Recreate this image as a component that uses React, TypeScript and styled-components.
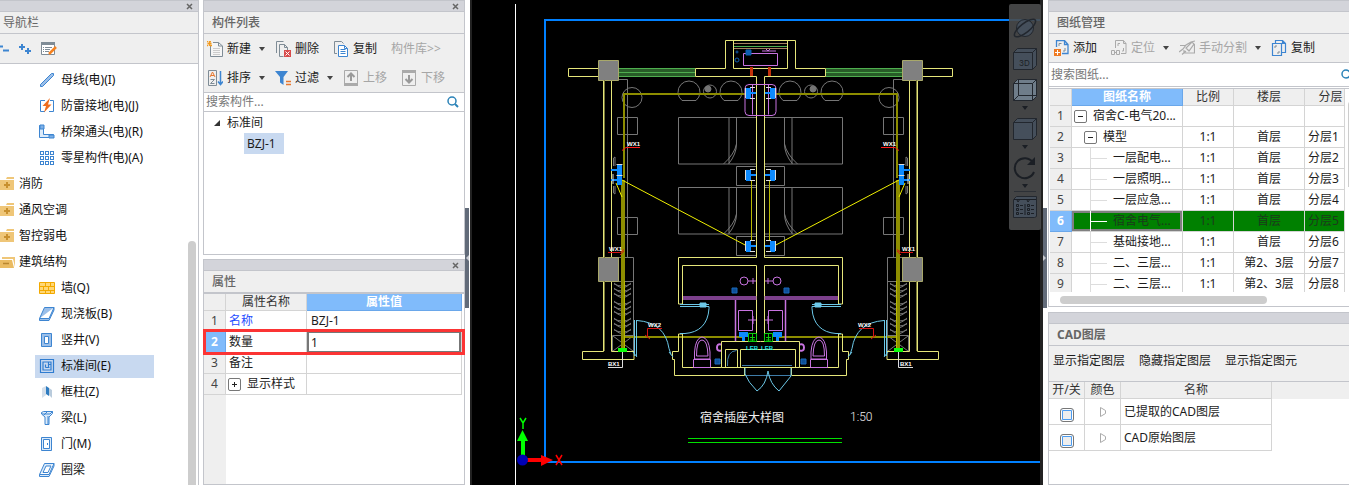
import React from "react";
import styled, { createGlobalStyle, css } from "styled-components";

const line = "#c3c5cb";
const grid = "#d4d4d4";
const blue = "#3d85d1";

const GlobalStyle = createGlobalStyle`
  * { box-sizing: border-box; }
  body {
    margin: 0;
    background: #fff;
    color: #1c1c1c;
    font: 12px/16px "Noto Sans", "Noto Sans CJK SC", sans-serif;
    overflow: hidden;
  }
  button, input { font: inherit; color: inherit; }
  svg { display: block; flex: none; }
`;

/* ---------- shell ---------- */

const Shell = styled.div`
  display: flex;
  height: 100vh;
`;

const NavColumn = styled.nav`
  display: flex;
  flex: 0 0 199px;
  flex-direction: column;
  margin-right: 4px;
  border-right: 1px solid ${line};
`;

const SideColumn = styled.div<{ $width: number; $top: number; $gap: number; $bottom: number }>`
  flex: 0 0 ${(p) => p.$width}px;
  min-width: 0;
  display: grid;
  grid-template-columns: minmax(0, 1fr);
  grid-template-rows: minmax(0, ${(p) => p.$top}fr) minmax(0, ${(p) => p.$bottom}fr);
  row-gap: ${(p) => p.$gap}px;
`;

const Panel = styled.section<{ $open?: boolean }>`
  display: flex;
  flex-direction: column;
  min-height: 0;
  border: 0 solid ${line};
  border-left-width: 1px;
  border-right-width: ${(p) => (p.$open ? 0 : 1)}px;
  border-bottom-width: 1px;
`;

const Strip = styled.div`
  display: flex;
  flex: 0 0 12px;
  align-items: center;
  justify-content: flex-end;
  padding-right: 5px;
  background: #d3d4da;
  border-top: 1px solid ${line};
  border-bottom: 1px solid ${line};
`;

const CloseButton = styled.button`
  display: flex;
  padding: 0;
  border: 0;
  background: none;
`;

const Title = styled.h2<{ $indent: number; $weight?: number }>`
  flex: 0 0 22px;
  margin: 0;
  padding-left: ${(p) => p.$indent}px;
  background: #efefef;
  border-bottom: 1px solid ${line};
  color: #666;
  font-size: 12px;
  line-height: 21px;
  font-weight: ${(p) => p.$weight ?? 400};
`;

const Toolbar = styled.div<{ $height: number; $pad: number; $gap: number }>`
  display: flex;
  flex: none;
  height: ${(p) => p.$height}px;
  align-items: center;
  gap: ${(p) => p.$gap}px;
  padding-left: ${(p) => p.$pad}px;
  background: #efefef;
  overflow: hidden;
`;

const ToolArea = styled.div`
  flex: none;
  background: #efefef;
  border-bottom: 1px solid ${line};
`;

const Tool = styled.button<{ $drop?: boolean }>`
  display: flex;
  flex: none;
  align-items: center;
  gap: 4px;
  padding: 0 ${(p) => (p.$drop ? 0 : 4)}px 0 0;
  border: 0;
  background: none;
  white-space: nowrap;
  &:disabled { color: #a6a6a6; }
`;

const CaretBox = styled.span`
  padding-left: 4px;
`;

const PlainTool = styled.button`
  flex: none;
  padding: 0 0 6px;
  border: 0;
  background: none;
  white-space: nowrap;
`;

const IconTool = styled.button`
  display: flex;
  padding: 0;
  border: 0;
  background: none;
`;

const Search = styled.label<{ $height: number; $clip?: boolean }>`
  display: flex;
  flex: 0 0 ${(p) => p.$height}px;
  align-items: center;
  padding: 0 ${(p) => (p.$clip ? 0 : 5)}px 0 2px;
  border-bottom: 1px solid ${line};
  overflow: hidden;
  svg { margin-right: ${(p) => (p.$clip ? -4 : 0)}px; }
`;

const SearchInput = styled.input`
  flex: 1;
  min-width: 0;
  height: 16px;
  padding: 0;
  border: 0;
  outline: 0;
  background: none;
  &::placeholder { color: #777; opacity: 1; }
`;

/* ---------- navigation ---------- */

const NavBody = styled.div`
  display: flex;
  flex: 1;
  min-height: 0;
`;

const NavList = styled.ul`
  flex: 1;
  margin: 0;
  padding: 3px 0 0;
  list-style: none;
  overflow: hidden;
`;

const NavRow = styled.li<{ $child?: boolean }>`
  display: flex;
  align-items: center;
  height: 26px;
  padding-left: ${(p) => (p.$child ? 35 : 0)}px;
`;

const NavItem = styled.a<{ $child?: boolean; $active?: boolean }>`
  display: flex;
  align-items: center;
  gap: ${(p) => (p.$child ? 6 : 4)}px;
  width: ${(p) => (p.$child ? 119 : 150)}px;
  height: 23px;
  padding-left: ${(p) => (p.$child ? 4 : 0)}px;
  background: ${(p) => (p.$active ? "#c8d9f0" : "transparent")};
  color: #111;
  text-decoration: none;
  white-space: nowrap;
`;

const Track = styled.div<{ $width: number; $offset: number; $inset?: number }>`
  flex: 0 0 ${(p) => p.$width}px;
  min-width: 0;
  padding: ${(p) => p.$offset}px 0 0 ${(p) => p.$inset ?? 0}px;
  overflow: hidden;
`;

const Thumb = styled.div<{ $length?: number }>`
  width: 8px;
  height: ${(p) => (p.$length ? `${p.$length}px` : "100%")};
  border-radius: 4px 4px 0 0;
  background: #cdcdcd;
`;

/* ---------- component tree ---------- */

const Tree = styled.ul`
  flex: 1;
  margin: 0;
  padding: 0;
  list-style: none;
`;

const TreeRow = styled.li`
  display: flex;
  align-items: center;
  height: 21px;
  gap: 7px;
  padding-left: 10px;
`;

const TreeLeaf = styled.button`
  height: 21px;
  margin-left: 30px;
  padding: 0 8px 0 3px;
  border: 0;
  background: #c8d9f0;
`;

/* ---------- tables ---------- */

const Table = styled.table<{ $row: number }>`
  table-layout: fixed;
  width: 0;
  border-collapse: separate;
  border-spacing: 0;
  th, td {
    height: ${(p) => p.$row}px;
    padding: 0;
    border: 0 solid ${grid};
    border-right-width: 1px;
    border-bottom-width: 1px;
    font-weight: 400;
    line-height: 16px;
    white-space: nowrap;
    overflow: hidden;
  }
  thead th { height: 17px; background: #efefef; text-align: center; color: #333; }
  tbody th { background: #efefef; color: #444; text-align: center; }
`;

const HeadCell = styled.th<{ $w: number; $active?: boolean; $shift?: number }>`
  width: ${(p) => p.$w}px;
  ${(p) => p.$shift && css`&& { padding-left: ${p.$shift}px; }`}
  ${(p) =>
    p.$active &&
    css`
      && { background: #80bbfb; color: #fff; font-weight: 700; border-color: #6aa7ea; }
    `}
`;

const RowHead = styled.th<{ $active?: boolean }>`
  ${(p) =>
    p.$active &&
    css`
      && { background: #80bbfb; color: #fff; font-weight: 700; border-color: #6aa7ea; }
    `}
`;

const Row = styled.tr<{ $green?: boolean; $marked?: boolean }>`
  ${(p) => p.$marked && css`position: relative;`}
  ${(p) => p.$green && css`td { background: #008000; color: #1c3a1c; }`}
`;

const Cell = styled.td<{ $pad?: number; $center?: boolean; $link?: boolean; $focus?: boolean }>`
  && { padding-left: ${(p) => p.$pad ?? 0}px; }
  text-align: ${(p) => (p.$center ? "center" : "left")};
  ${(p) => p.$link && css`color: #1f4dff;`}
  ${(p) => p.$focus && css`box-shadow: inset 0 0 0 2px #808080;`}
`;

const CellLine = styled.div<{ $gap: number }>`
  display: flex;
  align-items: center;
  gap: ${(p) => p.$gap}px;
`;

const ValueInput = styled.input`
  display: block;
  width: 100%;
  height: 20px;
  padding: 0 2px;
  border: 2px solid #777;
  border-width: 1px 2px;
  outline: 0;
`;

const RedMark = styled.span`
  position: absolute;
  top: -3px;
  right: -3px;
  bottom: -2px;
  left: -1px;
  border: 3px solid #fb3434;
  pointer-events: none;
`;

const Expander = styled.button`
  display: flex;
  flex: none;
  align-items: center;
  justify-content: center;
  width: 13px;
  height: 13px;
  padding: 0;
  border: 1px solid #777;
  border-radius: 2px;
  background: #fff;
`;

const Branch = styled.span<{ $bright?: boolean }>`
  display: flex;
  align-items: center;
  width: 17px;
  height: 20px;
  border-left: 1px solid ${(p) => (p.$bright ? "#fff" : "#ddd")};
  &::after {
    content: "";
    flex: 1;
    height: 1px;
    background: ${(p) => (p.$bright ? "#fff" : "#ddd")};
  }
`;

const PropertyBody = styled.div`
  flex: 1;
  border-top: 1px solid ${line};
  background: linear-gradient(to right, #efefef 22px, #fff 22px);
`;

const SheetBody = styled.div`
  display: flex;
  flex: 1;
  min-height: 0;
  margin-top: 1px;
  border-top: 1px solid ${line};
  padding-left: 1px;
`;

const SheetScroll = styled.div`
  flex: 1;
  overflow: hidden;
`;

const BottomTrack = styled.div`
  flex: 0 0 14px;
  padding: 4px 0 0 11px;
`;

const BottomThumb = styled.div`
  width: 207px;
  height: 8px;
  border-radius: 4px;
  background: #cdcdcd;
`;

const LayerBody = styled.div`
  flex: 1;
  border-top: 1px solid ${line};
  background: linear-gradient(to bottom, #efefef 17px, #fff 17px);
`;

const LayerCheck = styled.input`
  appearance: none;
  display: block;
  width: 14px;
  height: 14px;
  margin: 7px auto 0;
  border: 1px solid #777;
  border-radius: 3px;
  background: #eee;
  box-shadow: inset 0 0 0 1px #fff, inset 0 0 0 2px #4c9cf0;
`;

/* ---------- splitters and canvas ---------- */

const Splitter = styled.div`
  flex: 0 0 5px;
  padding-top: 208px;
`;

const Handle = styled.div`
  display: flex;
  align-items: center;
  width: 4px;
  height: 100px;
  background: #626b79;
`;

const Stage = styled.main`
  position: relative;
  flex: 1;
  min-width: 0;
  background: #000;
  > svg { width: 100%; height: 100%; }
`;

const ViewTools = styled.div`
  position: absolute;
  top: 4px;
  right: 2px;
  display: flex;
  flex-direction: column;
  align-items: center;
  width: 32px;
  height: 226px;
  padding-top: 12px;
  background: #4a4b4ce6;
  border-radius: 2px;
`;

const ViewButton = styled.button<{ $gap?: number }>`
  display: flex;
  flex-direction: column;
  align-items: center;
  gap: 4px;
  padding: 0;
  margin-bottom: ${(p) => p.$gap ?? 7}px;
  border: 0;
  background: none;
`;

const ViewRule = styled.div`
  flex: none;
  width: 22px;
  height: 1px;
  margin-bottom: 3px;
  background: #2c3036;
`;

/* ---------- icons ---------- */

const I = ({ children, w = 16, h = 16 }: { children: React.ReactNode; w?: number; h?: number }) => (
  <svg width={w} height={h} viewBox={`0 0 ${w} ${h}`} fill="none" aria-hidden="true">{children}</svg>
);

const Close = () => (
  <CloseButton aria-label="关闭">
    <I w={7} h={7}><path d="M1 1l5 5M6 1l-5 5" stroke="#666" strokeWidth="1.5" /></I>
  </CloseButton>
);

const Caret = ({ color = "#444" }: { color?: string }) => (
  <I w={6} h={4}><path d="M0 0h6L3 4z" fill={color} /></I>
);

const Magnifier = () => (
  <I w={12} h={12}>
    <circle cx="5" cy="5" r="4" stroke="#2b83b8" strokeWidth="1.5" />
    <path d="M8 8l3 3" stroke="#2b83b8" strokeWidth="2" />
  </I>
);

const icons = {
  fresh: <I><path d="M3.500 5v10.500h12V5l-4-3.500H6" fill="#f5f5f5" stroke="#7f8c96" /><path d="M11.500 1.500V5h4" stroke="#7f8c96" /><path d="M6 7.500h7M6 9.500h7M6 11.500h7M6 13.500h7" stroke="#ccc" /><path d="M0 .5h1m1 0h2M.5 2.500h4M0 4.500h1m2 0h2M2.500 0v5" stroke="#f39a1e" strokeWidth="1.500" /></I>,
  remove: <I><path d="M1.500 12V.5h7M4.500 15.500V3.500h5l3 3V9M9.500 3.500v3h3M4.500 15.500h4" stroke="#7f8c96" /><path d="M9 9h7v7H9z" fill="#d84b4b" /><path d="M10.500 10.500l4 4M14.500 10.500l-4 4" stroke="#fff" /></I>,
  copy: <I><path d="M1.500 12.500V.5h7l2 2M1.500 12.500H4" stroke="#7f8c96" /><path d="M5.500 4.500h6l3 3v8h-9z" fill="#fff" stroke={blue} /><path d="M11.500 4.500v3h3M7.500 8.500h5M7.500 10.500h5M7.500 12.500h5" stroke={blue} /></I>,
  sort: <I><path d="M1.500.5h8v15h-8z" stroke="#7f8c96" /><path d="M3 7l2.500-5L8 7M4 5.500h3" stroke="#e8772e" /><path d="M3.500 9.500h4l-4 4h4" stroke="#7f8c96" /><path d="M13.500 1v13M11 11.500l2.500 3 2.500-3" stroke={blue} strokeWidth="1.500" /></I>,
  filter: <I><path d="M0 1h13L8.500 7v8L5 12.500V7z" fill={blue} /><path d="M11 11.500h5M11 14.500h5" stroke="#e8772e" strokeWidth="1.500" /></I>,
  up: <I><path d="M1.500.5h13v15h-13z" stroke="#aaa" /><path d="M1 13h14v3H1z" fill="#aaa" /><path d="M8 11V4M4.500 7L8 3.500 11.500 7" stroke="#999" strokeWidth="2" /></I>,
  down: <I><path d="M1.500.5h13v15h-13z" stroke="#aaa" /><path d="M1 0h14v3H1z" fill="#aaa" /><path d="M8 5v7M4.500 9L8 12.500 11.500 9" stroke="#999" strokeWidth="2" /></I>,
  add: <I><path d="M3.500 7V.5h8l3.500 4v9H9M11.500.5v4H15" stroke={blue} strokeWidth="1.300" /><path d="M6 6V3.500H8.500M12 8v3h-2" stroke="#7f8c96" /><path d="M1 9h7v7H1z" fill="#ef7a22" /><path d="M4.500 10v5M2 12.500h5" stroke="#fff" /></I>,
  locate: <I><path d="M4.500 8V.5h8l2.500 3v10H10M12.500.5v3H15M7 6V3.500h2M12.500 8v3H11" stroke="#aaa" /><path d="M.5 10.500h3v4h-3zM5.500 10.500h3v4h-3zM3 12.500h3" stroke="#aaa" /></I>,
  split: <I><path d="M0 12l4-3 3-4 5-3 4-1M5 13h10.500V4M1 5.500h6M5 13v-3M7 8l3 3 5-7-2-2zM3 14.500L7 11" stroke="#aaa" strokeWidth="1.200" /></I>,
  sheets: <I><path d="M1.500 15.500V3.500h9v12z" stroke={blue} strokeWidth="1.200" /><path d="M4.500 3V.5h7l3 3v9h-4M11.500.5v3h3" stroke={blue} strokeWidth="1.200" /><path d="M4 8V6h2M8 11v2H6" stroke="#7f8c96" /></I>,
};

const navIcons = {
  busbar: <I><path d="M1.500 12.500L12.500 1.500h2v2L3.500 14.500h-2z" fill="#9bbfe9" stroke={blue} /></I>,
  ground: <I><path d="M6 2.500H1.500v11H6M11 2.500h3.500v11H10" stroke={blue} /><path d="M11 0L3.500 8H7L5 14.500 12.500 6.500H9z" fill="#ef6d1d" /></I>,
  elbow: <I><path d="M.5 1.500h4v9h10v3H.5z" fill="#dcebfa" stroke={blue} /><path d="M1 1h4v4H1zM10 11h5v3h-5z" fill="#7fb0e6" stroke={blue} /></I>,
  parts: <I>{[1, 6, 11].flatMap((y) => [1, 6, 11].map((x) => <rect key={`${x}-${y}`} x={x + 0.5} y={y + 0.5} width="3" height="3" stroke={blue} />))}</I>,
  wall: <I><path d="M.5 2.500h15v11H.5z" fill="#ffd777" stroke="#f2a900" /><path d="M0 6.500h16M0 10.500h16M6.500 2v4M11.500 2v4M4.500 6v4M9.500 6v4M6.500 10v4M11.500 10v4" stroke="#f2a900" /></I>,
  slab: <I><path d="M.5 12.500L5.500 1.500h9.500l-5 11zv2H10L15 4V1.500" fill="#9bbfe9" stroke={blue} /></I>,
  shaft: <I><path d="M2.500 1.500h10v13h-10z" fill="#9bbfe9" stroke={blue} /><path d="M5.500 4.500h4v7h-4z" fill="#fff" stroke={blue} /></I>,
  room: <I><path d="M1.500 1.500h13v13h-13zM4 4h8v8H4zM6.500 9.500h4M6.500 6.500v3M9.500 4v5.500M9.500 6.500H12" stroke="#2f7cd0" strokeWidth="1.200" /></I>,
  column: <I><path d="M3 4l4-2v9l-4 3z" fill="#d5dfea" /><path d="M7 2l3 2v8l-3-2z" fill="#2f7cc0" /><path d="M10 4l3 2v8l-3-3z" fill="#b9cbdc" /></I>,
  beam: <I><path d="M2.500 2.500l2-1h9v2L10 7v7.500H6V7L2.500 4z" fill="#dcebfa" stroke={blue} /><path d="M3 4h8l2.500-2.500M9 6v8M5 5l3-3" stroke={blue} /></I>,
  door: <I><path d="M2.500 1.500h10v13h-10z" stroke={blue} fill="#dcebfa" /><path d="M4.500 3.500h6v9h-6z" stroke={blue} fill="#fff" /><path d="M8.500 7v2" stroke={blue} /></I>,
  ring: <I><path d="M.5 12.500L5.500 1.500h9.500l-5 11zv2H10L15 4V1.500" fill="#dcebfa" stroke={blue} /><path d="M4 10.500l3-6.500h5L9 10.500z" fill="#fff" stroke={blue} /></I>,
  folder: <I w={15} h={14}><path d="M0 3h14v10H0zM7 0h7v2H6z" fill="#efc678" /><path d="M7 5v6M4 8h6" stroke="#c8902f" strokeWidth="2" /></I>,
  open: <I w={15} h={14}><path d="M2 2h13v10L13 4H2z" fill="#efc678" /><path d="M0 5h12l2 8H0z" fill="#eabb62" /><path d="M3 8.500h6" stroke="#b98730" strokeWidth="1.500" /></I>,
};

/* ---------- data ---------- */

type NavEntry = { label: string; icon: keyof typeof navIcons; child?: boolean; active?: boolean };

const navEntries: NavEntry[] = [
  { label: "母线(电)(I)", icon: "busbar", child: true },
  { label: "防雷接地(电)(J)", icon: "ground", child: true },
  { label: "桥架通头(电)(R)", icon: "elbow", child: true },
  { label: "零星构件(电)(A)", icon: "parts", child: true },
  { label: "消防", icon: "folder" },
  { label: "通风空调", icon: "folder" },
  { label: "智控弱电", icon: "folder" },
  { label: "建筑结构", icon: "open" },
  { label: "墙(Q)", icon: "wall", child: true },
  { label: "现浇板(B)", icon: "slab", child: true },
  { label: "竖井(V)", icon: "shaft", child: true },
  { label: "标准间(E)", icon: "room", child: true, active: true },
  { label: "框柱(Z)", icon: "column", child: true },
  { label: "梁(L)", icon: "beam", child: true },
  { label: "门(M)", icon: "door", child: true },
  { label: "圈梁", icon: "ring", child: true },
];

const sheets = [
  { name: "宿舍C-电气20...", level: 0, scale: "", floor: "", layer: "" },
  { name: "模型", level: 1, scale: "1:1", floor: "首层", layer: "分层1" },
  { name: "一层配电...", level: 2, scale: "1:1", floor: "首层", layer: "分层2" },
  { name: "一层照明...", level: 2, scale: "1:1", floor: "首层", layer: "分层3" },
  { name: "一层应急...", level: 2, scale: "1:1", floor: "首层", layer: "分层4" },
  { name: "宿舍电气...", level: 2, scale: "1:1", floor: "首层", layer: "分层5" },
  { name: "基础接地...", level: 2, scale: "1:1", floor: "首层", layer: "分层6" },
  { name: "二、三层...", level: 2, scale: "1:1", floor: "第2、3层", layer: "分层7" },
  { name: "二、三层...", level: 2, scale: "1:1", floor: "第2、3层", layer: "分层8" },
];

const layers = ["已提取的CAD图层", "CAD原始图层"];

/* ---------- drawing ---------- */

const Y = "#e6e67a";
const G = "#767676";
const C = "#6cc8e8";
const P = "#c873e0";

const Socket = ({ x, y }: { x: number; y: number }) => (
  <g>
    <path d={`M${x} ${y}h5v11h-5zM${x + 5} ${y + 4}h5v2h-5z`} fill="#0d8bff" />
    <path d={`M${x + 4} ${y - 0.5}h5M${x + 4} ${y + 10.5}h5M${x - 0.5} ${y}v10`} stroke="#ddd" />
  </g>
);

const HalfPlan = () => (
  <g fill="none">
    {/* furniture */}
    <g stroke={G}>
      <path d="M618 79.500h9.500V257M617.500 117.500h20v17h-20zM617.500 217.500h20v17h-20z" />
      <circle cx="632" cy="97.500" r="10" />
      <path d="M682 100.500a11 11 0 1 1 14 0zM724 100.500a11 11 0 1 1 14 0z" />
      <circle cx="710" cy="91.500" r="6.500" />
      <circle cx="708" cy="89" r="3" fill={G} />
      <path d="M756 117.500h-77.500v46.500H756M729 117.500v46M736.500 117.500V144q-2 10-13 20M736.500 144q0 10-8 20" />
      <path d="M756 187.500h-77.500v46.500H756M729 187.500v46M736.500 187.500V214q-2 10-13 20M736.500 214q0 10-8 20" />
      <path d="M756 166.500h-19.500v19H756M756 236.500h-19.500v19H756" />
      <path d="M618 257.500h15.500V351M612.500 281.500h21M612.500 335.500h21v16h-21zM613 336l20 15M633 336l-20 15" />
      <path d="M613.500 166v-8l1.500-1v9M613.500 186v7l1.500 1v-8" />
      {[284, 289, 294, 302, 307, 312, 319, 324, 330].map((y) => (
        <path key={y} d={`M614 ${y}q8 4 17 0M614 ${y - 1}q4 4 8 5M631 ${y - 1}q-4 4-8 5`} />
      ))}
    </g>

    {/* wiring */}
    <path d="M750 94H624V178" stroke="#8d8d00" strokeWidth="2" />
    <path d="M623 180V350" stroke="#8d8d00" strokeWidth="4" />
    <path d="M624 337H742" stroke="#8d8d00" strokeWidth="2" />
    <path d="M751.500 181v59M624.500 281v69" stroke="#b9b900" />
    <path d="M622 180L747 246M616 183l6 14" stroke="#f0f000" />

    {/* walls */}
    <g stroke={Y}>
      <path d="M598 68.500h-29.500v8H598M603.500 80v178M611.500 80v178M603.500 281v70.500M611.500 281v70.500" />
      <path d="M695.500 68.500v8h61V257.500M695.500 68.500h30v-28h8v28H761M756.500 257.500h-78v46.500h4V265.500H756.500V341.500" />
      <path d="M603.500 351.500h-21v8H634v-8h-22.500" />
      <path d="M678.500 334h4v33.500h39v-26h39M678.500 334v17.500h-6v8h2v16h54.500M721.500 367.500H761" />
      <path d="M598.500 60.500h20v20h-20zM598.500 257.500h20v24h-20z" fill="#808080" stroke="#a8a86a" />
    </g>
    <path d="M604.500 80v178M604.500 281v70" stroke="#77773a" />

    {/* windows */}
    <path d="M619 69h76v7h-76z" fill="#285c28" />
    <path d="M619 68.500h76M619 72.500h76M619 76.500h76M734 46.500h27" stroke="#4fae4f" />
    <path d="M734 43.500h27M734 48.500h27" stroke="#a57f62" />

    {/* doors */}
    <g stroke={C}>
      <path d="M634.500 320v36M636.500 320v36M637 320.500q28 2 32 28l2 6M669 352l4 5M633 352l4 5" />
      <path d="M680 304.500h29M680 306.500h29v2c-1 16-10 24-24 25l-5 0" />
      <path d="M700 303h6v4h-6z" fill={C} />
    </g>

    {/* plumbing */}
    <path d="M683 298h73.500" stroke="#7c408c" strokeWidth="4" />
    <g stroke={P}>
      <path d="M735.500 300v41" strokeWidth="1.500" />
      <circle cx="744" cy="281" r="4" />
      <path d="M748 281h8M753 278v6M738.500 310.500h14v20h-14zM748 320h8M753 316v8" />
      <path d="M694.500 359v-7q1-14 7.500-15 7 1 8 15v7zM696.500 356q0-16 5.500-16t6 16zM693.500 359.500h17v8h-17z" />
      <path d="M721 344.500q-4-1-4 3t4 3" strokeWidth="2" />
      <path d="M761 84.500h-12q-4 0-4 4v23q0 4 4 4h12M752.500 84.500v30" />
    </g>
    <path d="M732 288h5v5h-5zM715 359h5v5h-5z" fill="#0d4f96" stroke="#1a68bb" />
    <path d="M750 67h3v9h-3z" fill="#c4310b" />

    <Socket x={746} y={88} />
    <Socket x={746} y={170} />
    <Socket x={746} y={241} />
    <path d="M617 165h5v10h-5zM617 176h5v9h-5zM611 169h6v2h-6zM611 179h6v2h-6z" fill="#0d8bff" />
    <path d="M616.500 164.500h6M616.500 175.500h6M613 174v10" stroke="#ddd" />
    <path d="M739 332h9v5h-3v4h-3v-4h-3z" fill="#0d8bff" />
    <path d="M748.500 333.500h8v8h-8zM752.500 334v7M750 337.500h5M750 340h5" stroke="#0bcf0b" />
    <path d="M618 348h9v4h-9z" fill="#0cff0c" />
    <path d="M622.500 352v15.500H608" stroke="#ddd" />
    <path d="M640 147.500h-14l-4 3" stroke="#ff1a1a" />
    <path d="M608 252.500h12l4-3M620 255l4-4" stroke="#d81414" />
    <path d="M662 328.500h-14.500v8M645 335l5 4" stroke="#d81414" />
  </g>
);

const Tag = ({ x, y, fill = "#fff", children }: { x: number; y: number; fill?: string; children: string }) => (
  <text x={x} y={y} fill={fill} fontFamily="'Liberation Sans Narrow', 'Liberation Sans', sans-serif" fontWeight="700" fontSize="6">{children}</text>
);

const Plan = () => (
  <svg viewBox="470 0 573 485" role="img" aria-label="宿舍插座大样图">
    <path d="M471 0v485" stroke="#222" strokeWidth="2" />
    <path d="M515.500 4V485" stroke="#fff" />
    <path d="M1040 20H545V462H1040" fill="none" stroke="#0080ff" strokeWidth="2" />
    <HalfPlan />
    <g transform="translate(1521 0) scale(-1 1)"><HalfPlan /></g>
    <g fill="none">
      {/* entrance recess and its folding doors */}
      <path d="M733 40.500h55M725.500 349.500h12v18h-12zM740.500 349.500h55v18h-55zM729 375.500h15.500v-8M791.500 367.500v8" stroke={Y} />
      <path d="M745 375.500h46M742 365.500h50M727.500 366q-1-15 9-15.500" stroke="#3f7ca8" />
      <path d="M745 368v6q3 8 12 17 9-6 11-20 2 13 11 20l12-15v-8" stroke={C} />
      {/* air conditioner */}
      <path d="M743.500 53.500h34v12h-34zM762 51h14M766 49l2 2 2-2" stroke={P} />
      <g stroke="#0d5fb0">
        <circle cx="737" cy="60" r="2" /><circle cx="737" cy="52" r="1" />
        <path d="M746 50h5v5h-5z" fill="#0d5fb0" />
      </g>
    </g>
    <Tag x={627} y={146}>WX1</Tag>
    <Tag x={883} y={146}>WX1</Tag>
    <Tag x={609} y={251}>WX1</Tag>
    <Tag x={902} y={251}>WX1</Tag>
    <Tag x={648} y={327}>WX2</Tag>
    <Tag x={858} y={327}>WX2</Tag>
    <Tag x={608} y={366}>BX1</Tag>
    <Tag x={900} y={366}>BX1</Tag>
    <Tag x={746} y={350} fill="#19e6e6">LEB</Tag>
    <Tag x={761} y={350} fill="#19e6e6">LEB</Tag>

    <text x="700" y="422" fill="#eee" fontFamily="'Noto Sans CJK SC', sans-serif" fontSize="12">宿舍插座大样图</text>
    <text x="850" y="421" fill="#eee" fontFamily="Roboto, sans-serif" fontWeight="300" fontSize="12">1:50</text>
    <path d="M688 438.500h154M688 442.500h154" stroke="#00e000" />

    <path d="M523 457V440" stroke="#00ff00" strokeWidth="4" />
    <path d="M517 441l5.500-11 5.500 11z" fill="#00ff00" />
    <path d="M520 418l3 5 3-5M523 423v6" stroke="#00ff00" strokeWidth="1.500" fill="none" />
    <path d="M525 460h17" stroke="#ff0000" strokeWidth="4" />
    <path d="M541 455l12 5-12 6z" fill="#ff0000" />
    <path d="M556 455l6 10M562 455l-6 10" stroke="#ff0000" strokeWidth="1.500" />
    <circle cx="522.500" cy="460" r="5.500" fill="#0000b4" />
    <path d="M1041.500 0V485" stroke="#222" strokeWidth="3" />
  </svg>
);

/* ---------- viewer tools ---------- */

const Cube = ({ light, children }: { light?: boolean; children?: React.ReactNode }) => (
  <I w={24} h={24}>
    <path d="M.5 5.500l4-4h19v17l-4 4H.5z" fill={light ? "#6f7d8a" : "#454f5b"} stroke="#22272e" />
    <path d="M.5 5.500h19v17M19.500 5.500l4-4" stroke="#22272e" />
    {children}
  </I>
);

const ViewerTools = () => (
  <ViewTools role="toolbar" aria-label="视图">
    <ViewButton aria-label="动态观察">
      <I w={24} h={24}>
        <circle cx="12" cy="12" r="8.500" fill="#454f5b" stroke="#22272e" />
        <ellipse cx="12" cy="12" rx="13" ry="4.500" transform="rotate(-38 12 12)" stroke="#22272e" strokeWidth="1.500" />
      </I>
    </ViewButton>
    <ViewButton aria-label="三维">
      <Cube><text x="6" y="19" fill="#1b1f25" fontFamily="Inter, sans-serif" fontSize="8">3D</text></Cube>
    </ViewButton>
    <ViewButton aria-label="线框">
      <Cube light><path d="M5.500 2v15.500h18M5.500 17.500l-5 5" stroke="#22272e" /></Cube>
      <Caret color="#1b1f25" />
    </ViewButton>
    <ViewButton aria-label="实体"><Cube /><Caret color="#1b1f25" /></ViewButton>
    <ViewButton aria-label="旋转" $gap={3}>
      <I w={24} h={24}>
        <path d="M20 6.500A10 10 0 1 0 21 16" stroke="#1b1f25" strokeWidth="2" />
        <path d="M22 1v8h-8z" fill="#1b1f25" />
      </I>
      <Caret color="#1b1f25" />
    </ViewButton>
    <ViewRule />
    <ViewButton aria-label="显示设置">
      <I w={24} h={24}>
        <path d="M.5 4.500l3-3h20v20l-2 1H.5z" fill="#454f5b" stroke="#22272e" />
        <path d="M1 4.500h22M12 9v11M4 5l1 2 2-3M14 5l1 2 2-3" stroke="#1b1f25" />
        {[9.5, 13.5, 17.5].map((y) => <path key={y} d={`M3.500 ${y}h2v2h-2zM14.500 ${y}h2v2h-2zM7 ${y + 1}h3M18 ${y + 1}h3`} stroke="#1b1f25" />)}
      </I>
    </ViewButton>
  </ViewTools>
);

/* ---------- panels ---------- */

type ToolProps = { icon: keyof typeof icons; label: string; drop?: boolean; disabled?: boolean };

const ToolButton = ({ icon, label, drop, disabled }: ToolProps) => (
  <Tool $drop={drop} disabled={disabled}>
    {icons[icon]}
    {label}
    {drop && <CaretBox><Caret /></CaretBox>}
  </Tool>
);

const ExpandButton = ({ open }: { open?: boolean }) => (
  <Expander aria-label={open ? "收起" : "展开"}>
    <I w={7} h={7}><path d={open ? "M1 3.500h5" : "M1 3.500h5M3.500 1v5"} stroke="#222" /></I>
  </Expander>
);

const Navigation = () => (
  <NavColumn>
    <Strip><Close /></Strip>
    <Title $indent={3}>导航栏</Title>
    <ToolArea>
      <Toolbar $height={29} $pad={0} $gap={10}>
        <IconTool aria-label="全部折叠"><I w={9} h={12}><path d="M0 3.500h3M3 7.500h6" stroke={blue} strokeWidth="2" /></I></IconTool>
        <IconTool aria-label="全部展开"><I w={12} h={12}><path d="M0 4h6M3 1v6M6 8h6M9 5v6" stroke={blue} strokeWidth="2" /></I></IconTool>
        <IconTool aria-label="编辑">
          <I><path d="M.5 2.500h13v11H.5z" fill="#fff" stroke="#7f8c96" /><path d="M0 1h14v3H0z" fill="#7f8c96" /><path d="M2 6.500h1m1 0h7M2 8.500h1m1 0h5M2 10.500h1m1 0h4" stroke="#7f8c96" /><path d="M8 13l7-7" stroke="#f58220" strokeWidth="2.500" /></I>
        </IconTool>
      </Toolbar>
    </ToolArea>
    <NavBody>
      <NavList>
        {navEntries.map((e) => (
          <NavRow key={e.label} $child={e.child}>
            <NavItem href="#" $child={e.child} $active={e.active}>{navIcons[e.icon]}{e.label}</NavItem>
          </NavRow>
        ))}
      </NavList>
      <Track $width={10} $offset={177}><Thumb /></Track>
    </NavBody>
  </NavColumn>
);

const ComponentList = () => (
  <Panel>
    <Strip><Close /></Strip>
    <Title $indent={8} $weight={500}>构件列表</Title>
    <ToolArea>
      <Toolbar $height={29} $pad={3} $gap={10}>
        <ToolButton icon="fresh" label="新建" drop />
        <ToolButton icon="remove" label="删除" />
        <ToolButton icon="copy" label="复制" />
        <Tool disabled>构件库&gt;&gt;</Tool>
      </Toolbar>
      <Toolbar $height={29} $pad={3} $gap={10}>
        <ToolButton icon="sort" label="排序" drop />
        <ToolButton icon="filter" label="过滤" drop />
        <ToolButton icon="up" label="上移" disabled />
        <ToolButton icon="down" label="下移" disabled />
      </Toolbar>
    </ToolArea>
    <Search $height={19}>
      <SearchInput placeholder="搜索构件..." aria-label="搜索构件" />
      <Magnifier />
    </Search>
    <Tree>
      <TreeRow><I w={6} h={6}><path d="M6 0v6H0z" fill="#333" /></I>标准间</TreeRow>
      <TreeRow><TreeLeaf>BZJ-1</TreeLeaf></TreeRow>
    </Tree>
  </Panel>
);

const Properties = () => (
  <Panel>
    <Strip><Close /></Strip>
    <Title $indent={8} $weight={500}>属性</Title>
    <PropertyBody>
      <Table $row={21}>
        <thead>
          <tr><HeadCell $w={22} /><HeadCell $w={81}>属性名称</HeadCell><HeadCell $w={155} $active>属性值</HeadCell></tr>
        </thead>
        <tbody>
          <Row><RowHead>1</RowHead><Cell $pad={3} $link>名称</Cell><Cell $pad={4}>BZJ-1</Cell></Row>
          <Row $marked>
            <RowHead $active>2<RedMark /></RowHead>
            <Cell $pad={3}>数量</Cell>
            <Cell><ValueInput defaultValue="1" aria-label="数量" /></Cell>
          </Row>
          <Row><RowHead>3</RowHead><Cell $pad={3}>备注</Cell><Cell /></Row>
          <Row><RowHead>4</RowHead><Cell $pad={2}><CellLine $gap={6}><ExpandButton />显示样式</CellLine></Cell><Cell /></Row>
        </tbody>
      </Table>
    </PropertyBody>
  </Panel>
);

const Sheets = () => (
  <Panel $open>
    <Strip />
    <Title $indent={8} $weight={500}>图纸管理</Title>
    <ToolArea>
      <Toolbar $height={28} $pad={4} $gap={10}>
        <ToolButton icon="add" label="添加" />
        <ToolButton icon="locate" label="定位" drop disabled />
        <ToolButton icon="split" label="手动分割" drop disabled />
        <ToolButton icon="sheets" label="复制" />
      </Toolbar>
    </ToolArea>
    <Search $height={24} $clip>
      <SearchInput placeholder="搜索图纸..." aria-label="搜索图纸" />
      <Magnifier />
    </Search>
    <SheetBody>
      <SheetScroll>
        <Table $row={21}>
          <thead>
            <tr>
              <HeadCell $w={22} /><HeadCell $w={111} $active>图纸名称</HeadCell><HeadCell $w={51}>比例</HeadCell>
              <HeadCell $w={71}>楼层</HeadCell><HeadCell $w={40} $shift={12}>分层</HeadCell>
            </tr>
          </thead>
          <tbody>
            {sheets.map((s, i) => {
              const current = i === 5;
              return (
                <Row key={i} $green={current}>
                  <RowHead $active={current}>{i + 1}</RowHead>
                  <Cell $pad={[2, 12, 18][s.level]} $focus={current}>
                    <CellLine $gap={6}>{s.level < 2 ? <ExpandButton open /> : <Branch $bright={current} />}{s.name}</CellLine>
                  </Cell>
                  <Cell $center>{s.scale}</Cell>
                  <Cell $center>{s.floor}</Cell>
                  <Cell $pad={3}>{s.layer}</Cell>
                </Row>
              );
            })}
          </tbody>
        </Table>
      </SheetScroll>
      <Track $width={4} $offset={12} $inset={3}><Thumb $length={86} /></Track>
    </SheetBody>
    <BottomTrack><BottomThumb /></BottomTrack>
  </Panel>
);

const Layers = () => (
  <Panel $open>
    <Strip />
    <Title $indent={8} $weight={700}>CAD图层</Title>
    <Toolbar $height={35} $pad={4} $gap={14}>
      <PlainTool>显示指定图层</PlainTool>
      <PlainTool>隐藏指定图层</PlainTool>
      <PlainTool>显示指定图元</PlainTool>
    </Toolbar>
    <LayerBody>
      <Table $row={26}>
        <thead><tr><HeadCell $w={36}>开/关</HeadCell><HeadCell $w={36}>颜色</HeadCell><HeadCell $w={151}>名称</HeadCell></tr></thead>
        <tbody>
          {layers.map((name) => (
            <Row key={name}>
              <Cell><LayerCheck type="checkbox" aria-label={name} /></Cell>
              <Cell $pad={14}><I w={8} h={10}><path d="M1.500.5v9l5-3v-3z" stroke="#aaa" /></I></Cell>
              <Cell $pad={3}>{name}</Cell>
            </Row>
          ))}
        </tbody>
      </Table>
    </LayerBody>
  </Panel>
);

export default function App() {
  return (
    <>
      <GlobalStyle />
      <Shell>
        <Navigation />
        <SideColumn as="aside" $width={262} $top={255} $gap={4} $bottom={226}>
          <ComponentList />
          <Properties />
        </SideColumn>
        <Splitter><Handle><I w={4} h={6}><path d="M4 0v6L1 3z" fill="#c9ccd2" /></I></Handle></Splitter>
        <Stage><Plan /><ViewerTools /></Stage>
        <Splitter><Handle><I w={4} h={6}><path d="M0 0v6l3-3z" fill="#c9ccd2" /></I></Handle></Splitter>
        <SideColumn as="aside" $width={301} $top={307} $gap={5} $bottom={173}>
          <Sheets />
          <Layers />
        </SideColumn>
      </Shell>
    </>
  );
}
